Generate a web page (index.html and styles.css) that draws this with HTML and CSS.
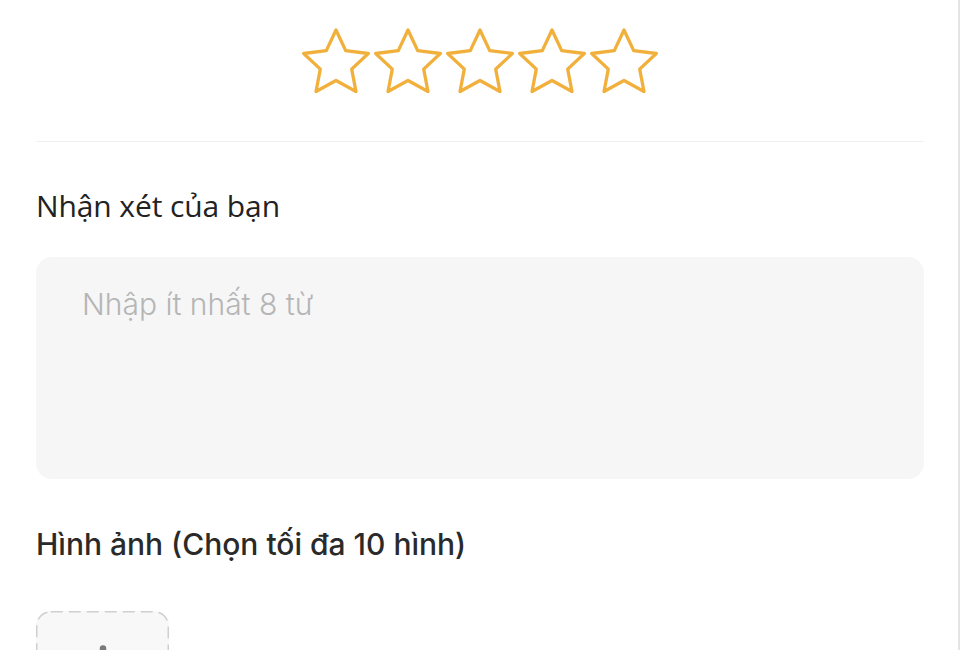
FILE: index.html
```html
<!DOCTYPE html>
<html lang="vi">
<head>
    <meta charset="UTF-8">
    <title>Đánh giá</title>
    <link rel="stylesheet" href="styles.css">
</head>
<body>
    <div class="page">
        <div class="stars">
            <svg class="star" viewBox="0 0 70 70"><path d="M35 3 L44.7 23.65 L67.34 26.49 L50.69 42.1 L54.99 64.51 L35 53.5 L15.01 64.51 L19.31 42.1 L2.66 26.49 L25.3 23.65 Z"/></svg>
            <svg class="star" viewBox="0 0 70 70"><path d="M35 3 L44.7 23.65 L67.34 26.49 L50.69 42.1 L54.99 64.51 L35 53.5 L15.01 64.51 L19.31 42.1 L2.66 26.49 L25.3 23.65 Z"/></svg>
            <svg class="star" viewBox="0 0 70 70"><path d="M35 3 L44.7 23.65 L67.34 26.49 L50.69 42.1 L54.99 64.51 L35 53.5 L15.01 64.51 L19.31 42.1 L2.66 26.49 L25.3 23.65 Z"/></svg>
            <svg class="star" viewBox="0 0 70 70"><path d="M35 3 L44.7 23.65 L67.34 26.49 L50.69 42.1 L54.99 64.51 L35 53.5 L15.01 64.51 L19.31 42.1 L2.66 26.49 L25.3 23.65 Z"/></svg>
            <svg class="star" viewBox="0 0 70 70"><path d="M35 3 L44.7 23.65 L67.34 26.49 L50.69 42.1 L54.99 64.51 L35 53.5 L15.01 64.51 L19.31 42.1 L2.66 26.49 L25.3 23.65 Z"/></svg>
        </div>
        <hr class="divider">
        <h2 class="label">Nhận xét của bạn</h2>
        <textarea class="comment" placeholder="Nhập ít nhất 8 từ"></textarea>
        <h2 class="label photos">Hình ảnh (Chọn tối đa 10 hình)</h2>
        <div class="upload">
            <svg class="plus" viewBox="0 0 40 40"><path d="M20 4 V36 M4 20 H36"/></svg>
        </div>
    </div>
</body>
</html>
```

FILE: styles.css
```css
html, body {
    margin: 0;
    height: 100%;
    overflow: hidden;
}
body {
    background: #fff;
    border-right: 2px solid #e4e4e4;
    box-sizing: border-box;
    font-family: "Open Sans", sans-serif;
    color: #222;
}
.page {
    padding: 0 34px 0 36px;
}
.stars {
    display: flex;
    justify-content: center;
    gap: 2px;
    padding-top: 27px;
}
.star {
    width: 70px;
    height: 70px;
}
.star path {
    fill: none;
    stroke: #f1b03b;
    stroke-width: 3.3;
    stroke-linejoin: round;
}
.divider {
    border: 0;
    border-top: 1px solid #f0f0f0;
    margin: 44px 0 0;
}
.label {
    margin: 44px 0 0;
    font-size: 30px;
    font-weight: 500;
    line-height: 40px;
    letter-spacing: -0.1px;
}
.comment {
    display: block;
    box-sizing: border-box;
    width: 100%;
    height: 222px;
    margin-top: 31px;
    padding: 29px 46px;
    border: 0;
    border-radius: 16px;
    background: #f6f6f6;
    resize: none;
    font-family: Inter, sans-serif;
    font-size: 30px;
    font-weight: 300;
    color: #222;
}
.comment::placeholder {
    color: #b5b5b5;
}
.photos {
    margin-top: 45px;
    font-family: Inter, sans-serif;
    font-size: 30px;
    font-weight: 500;
    letter-spacing: 0;
    color: #2a2a2a;
}
.upload {
    display: flex;
    justify-content: center;
    align-items: center;
    box-sizing: border-box;
    width: 133px;
    height: 133px;
    margin-top: 47px;
    border-radius: 14px;
    background-color: #f8f8f8;
    background-image: url("data:image/svg+xml,%3Csvg xmlns='http://www.w3.org/2000/svg' width='133' height='133'%3E%3Crect x='0.75' y='0.75' width='131.5' height='131.5' rx='14' fill='none' stroke='%23cfcfcf' stroke-width='1.5' stroke-dasharray='12 6'/%3E%3C/svg%3E");
}
.plus {
    width: 74px;
    height: 74px;
}
.plus path {
    stroke: #7a7a7a;
    stroke-width: 3.5;
    stroke-linecap: round;
}
```
